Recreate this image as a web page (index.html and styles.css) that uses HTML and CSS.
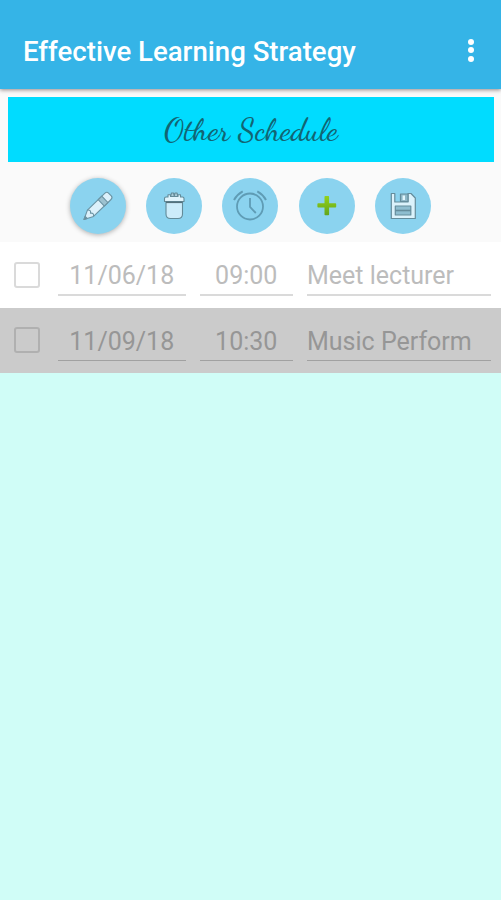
FILE: index.html
```html
<!DOCTYPE html>
<html lang="en">
<head>
<meta charset="utf-8">
<title>Effective Learning Strategy</title>
<link rel="stylesheet" href="styles.css">
</head>
<body>
<header class="appbar">
  <h1 class="title">Effective Learning Strategy</h1>
  <button class="menu" aria-label="More options"><i></i><i></i><i></i></button>
</header>
<main>
  <section class="panel">
    <h2 class="banner"><span>Other Schedule</span></h2>
    <div class="tools">
      <button class="tool raised" aria-label="Edit">
        <svg viewBox="0 0 56 56"><g transform="translate(14 41.5) rotate(-44)" stroke="#6b94a4" stroke-width="1.1" stroke-linejoin="round"><path d="M0 0 9-4.4H33Q36-4.4 36-2V2Q36 4.4 33 4.4H9Z" fill="#dcf1fb"/><path d="M24-4.4h5v8.8h-5z" fill="#9dc2d0"/><path d="M0 0 3-1.5V1.5Z" fill="#5b8798"/><path d="M9-4.4Q12-2 9 0 12 2 9 4.4" fill="none"/></g></svg>
      </button>
      <button class="tool" aria-label="Delete">
        <svg viewBox="0 0 56 56"><g stroke="#638b99" stroke-width="1.1" stroke-linejoin="round"><path d="M20 23.5V36Q20 40.5 24.5 40.5H32Q36.5 40.5 36.5 36V23.5Z" fill="#ccecfa"/><path d="M24.5 18.5 25.5 15H27.5L28.3 18 29 15H31L32 18.5Z" fill="#a9cbd8"/><path d="M18.5 20.5Q18.5 19 20 19H22V16.8H24.5V18.5H32V16.8H34.5V19H36.5Q38 19 38 20.5V23.5H18.5Z" fill="#e0f4fc"/></g><path d="M20 24.3h16.5" stroke="#54717c" stroke-width="1.6"/></svg>
      </button>
      <button class="tool" aria-label="Alarm">
        <svg viewBox="0 0 56 56" fill="none" stroke="#5f9cb5" stroke-width="1.8"><circle cx="28" cy="28.5" r="13"/><path d="M28 20V29L33.8 35"/><path d="M12 22Q15 16.5 20.7 13.4M35.3 13.4Q41 16.5 44 22" stroke-width="2"/></svg>
      </button>
      <button class="tool" aria-label="Add">
        <svg viewBox="0 0 56 56"><defs><linearGradient id="leaf" x2="0" y2="1"><stop stop-color="#93d21b"/><stop offset="1" stop-color="#63a51c"/></linearGradient></defs><path d="M26.3 18h3q.8 0 .8.8v6.5h6.3q.8 0 .8.8v2.6q0 .8-.8.8h-6.3v6.9q0 .8-.8.8h-3q-.8 0-.8-.8v-6.9h-6.3q-.8 0-.8-.8v-2.6q0-.8.8-.8h6.3v-6.5q0-.8.8-.8Z" fill="url(#leaf)"/></svg>
      </button>
      <button class="tool" aria-label="Save">
        <svg viewBox="0 0 56 56" stroke="#658d9c" stroke-width="1.2" stroke-linejoin="round"><path d="M16.3 15.5H19.8V24H33V15.5H36L40.3 20V40.5H16.3Z" fill="#dbf2fb"/><path d="M25.5 16H33V23.5H25.5Z" fill="#8fb8c8"/><path d="M28.8 17.5v4.5" stroke="#e2f6fc" stroke-width="2.4"/><path d="M20.3 28H35.8V37H20.3Z" fill="#8ebed0"/><path d="M20.3 32.5H35.8" stroke-width="1.6"/></svg>
      </button>
    </div>
  </section>
  <ul class="list">
    <li class="row">
      <span class="check"></span><span class="field date">11/06/18</span><span class="field time">09:00</span><span class="field task">Meet lecturer</span>
    </li>
    <li class="row selected">
      <span class="check"></span><span class="field date">11/09/18</span><span class="field time">10:30</span><span class="field task">Music Perform</span>
    </li>
  </ul>
</main>
</body>
</html>
```
FILE: styles.css
```css
* { box-sizing: border-box; }
body { margin: 0; min-height: 900px; background: #d0fdf7; font-family: Roboto, sans-serif; }
button { border: 0; padding: 0; }
.appbar {
  position: relative;
  display: flex;
  justify-content: space-between;
  height: 89px;
  padding: 36px 27px 0 23px;
  background: #35b4e7;
  box-shadow: 0 1px 4px rgba(70, 40, 40, .55);
}
.title { margin: 0; font-size: 27.6px; line-height: 32px; font-weight: 500; color: #fff; white-space: nowrap; }
.menu { display: flex; flex-direction: column; gap: 2.4px; height: 24px; margin-top: 3px; background: none; }
.menu i { width: 6px; height: 6px; border-radius: 50%; background: #fff; }
.panel { height: 153px; padding: 8px 7px 0 8px; background: #fafafa; }
.banner {
  display: flex;
  justify-content: center;
  height: 65px;
  margin: 0;
  background: #00dcff;
  color: #126573;
  font: 500 31.4px/67px "Dancing Script", "Liberation Serif", cursive;
  white-space: nowrap;
}
.tools { display: flex; justify-content: center; gap: 20.3px; padding: 16px 1.4px 0 0; }
.tool { width: 56px; height: 56px; border-radius: 50%; background: #8bd3ef; }
.raised { box-shadow: 0 1px 5px rgba(0, 0, 0, .3); }
.tool svg { display: block; width: 56px; height: 56px; }
.list { margin: 0; padding: 0; list-style: none; }
.row {
  display: flex;
  gap: 14px;
  height: 66px;
  padding-left: 14px;
  background: #fff;
  color: #bcbcbc;
  --line: #dadada;
}
.row.selected { height: 65px; background: #cbcbcb; color: #969696; --line: #a1a1a1; }
.check { width: 26px; height: 26px; margin: 20px 4px 0 0; border: 2px solid var(--line); border-radius: 3px; }
.selected .check { margin-top: 19px; border-color: #b0b0b0; }
.field { height: 54px; padding-top: 19px; border-bottom: 2px solid var(--line); font-size: 25px; line-height: 30px; white-space: nowrap; }
.selected .field { height: 53px; border-bottom-width: 1.5px; }
.date, .time { text-align: center; }
.date { width: 127.5px; }
.time { width: 93.5px; }
.task { width: 184px; }
```
